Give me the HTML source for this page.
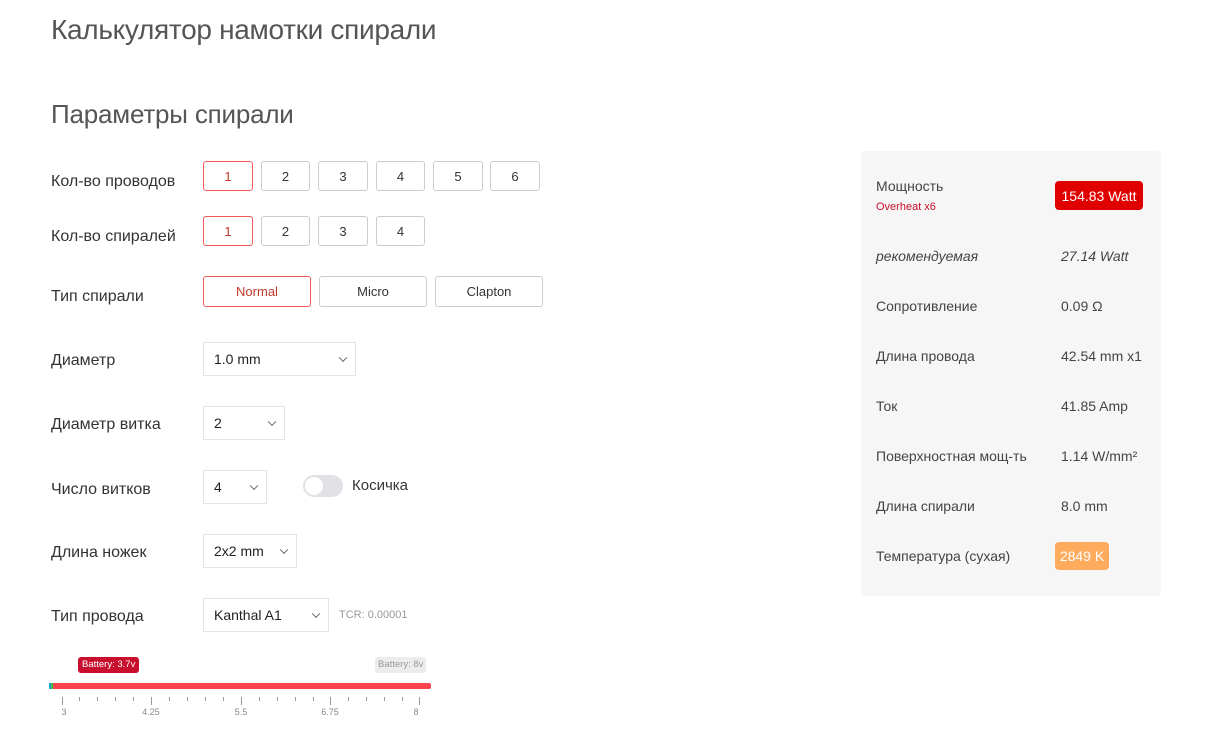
<!DOCTYPE html>
<html><head><meta charset="utf-8"><style>
body{margin:0;width:1207px;height:731px;background:#fff;font-family:"Liberation Sans",sans-serif;color:#333;position:relative;overflow:hidden}
.a{position:absolute;white-space:nowrap}
h1,h2{margin:0;font-weight:normal;color:#555;position:absolute;white-space:nowrap}
.lbl{position:absolute;left:51px;font-size:16px;color:#333;transform:translateY(-40%)}
.b{position:absolute;border:1px solid #ccc;border-radius:3px;box-sizing:border-box;font-size:13px;color:#333;display:flex;align-items:center;justify-content:center;background:#fff}
.b.on{border-color:#f05a5a;color:#c0392b}
.s{position:absolute;border:1px solid #e4e4e4;box-sizing:border-box;font-size:14px;color:#222;padding-left:10px;display:flex;align-items:center}
.s:after{content:"";position:absolute;right:9px;top:50%;width:5px;height:5px;border-right:1.3px solid #666;border-bottom:1.3px solid #666;transform:translateY(-70%) rotate(45deg)}
.p{position:absolute;font-size:14px;color:#444;transform:translateY(-50%)}
.tk{position:absolute;width:1px;background:#999;top:697px}
.tl{position:absolute;top:707px;font-size:9px;color:#888;transform:translateX(-50%)}
</style></head><body>
<h1 style="left:51px;top:14px;font-size:28px;letter-spacing:-0.3px">Калькулятор намотки спирали</h1>
<h2 style="left:51px;top:99px;font-size:26px;letter-spacing:-0.2px">Параметры спирали</h2>

<div class="lbl" style="top:180px">Кол-во проводов</div>
<div class="lbl" style="top:235px">Кол-во спиралей</div>
<div class="lbl" style="top:295px">Тип спирали</div>
<div class="lbl" style="top:359px">Диаметр</div>
<div class="lbl" style="top:423px">Диаметр витка</div>
<div class="lbl" style="top:488px">Число витков</div>
<div class="lbl" style="top:551px">Длина ножек</div>
<div class="lbl" style="top:615px">Тип провода</div>

<div class="b on" style="left:203px;top:161px;width:50px;height:30px">1</div>
<div class="b" style="left:261px;top:161px;width:49px;height:30px">2</div>
<div class="b" style="left:318px;top:161px;width:50px;height:30px">3</div>
<div class="b" style="left:376px;top:161px;width:49px;height:30px">4</div>
<div class="b" style="left:433px;top:161px;width:50px;height:30px">5</div>
<div class="b" style="left:490px;top:161px;width:50px;height:30px">6</div>

<div class="b on" style="left:203px;top:216px;width:50px;height:30px">1</div>
<div class="b" style="left:261px;top:216px;width:49px;height:30px">2</div>
<div class="b" style="left:318px;top:216px;width:50px;height:30px">3</div>
<div class="b" style="left:376px;top:216px;width:49px;height:30px">4</div>

<div class="b on" style="left:203px;top:276px;width:108px;height:31px">Normal</div>
<div class="b" style="left:319px;top:276px;width:108px;height:31px">Micro</div>
<div class="b" style="left:435px;top:276px;width:108px;height:31px">Clapton</div>

<div class="s" style="left:203px;top:342px;width:153px;height:34px">1.0 mm</div>
<div class="s" style="left:203px;top:406px;width:82px;height:34px">2</div>
<div class="s" style="left:203px;top:470px;width:64px;height:34px">4</div>
<div class="a" style="left:303px;top:475px;width:40px;height:22px;border-radius:11px;background:#e2e2e6"><div style="position:absolute;left:2px;top:2px;width:18px;height:18px;border-radius:50%;background:#fff"></div></div>
<div class="a" style="left:352px;top:477px;font-size:15px;color:#333">Косичка</div>
<div class="s" style="left:203px;top:534px;width:94px;height:34px">2x2 mm</div>
<div class="s" style="left:203px;top:598px;width:126px;height:34px">Kanthal A1</div>
<div class="a" style="left:339px;top:609px;font-size:11px;color:#999">TCR: 0.00001</div>

<div class="a" style="left:78px;top:657px;background:#c8102e;color:#fff;font-size:9.5px;padding:1px 4px;border-radius:3px;line-height:14px">Battery: 3.7v</div>
<div class="a" style="left:375px;top:657px;background:#ececec;color:#999;font-size:9.5px;padding:1px 3px;border-radius:3px;line-height:14px">Battery: 8v</div>
<div class="a" style="left:49px;top:683px;width:382px;height:6px;background:#f9434d;border-radius:2px"></div>
<div class="a" style="left:49px;top:683px;width:2px;height:6px;background:#1aa3c8"></div>
<div class="a" style="left:51px;top:683px;width:2px;height:6px;background:#3bbf4a"></div>
<div class="tk" style="left:62px;height:8px"></div><div class="tk" style="left:79px;height:4px"></div><div class="tk" style="left:97px;height:4px"></div><div class="tk" style="left:115px;height:4px"></div><div class="tk" style="left:133px;height:4px"></div><div class="tk" style="left:151px;height:8px"></div><div class="tk" style="left:169px;height:4px"></div><div class="tk" style="left:187px;height:4px"></div><div class="tk" style="left:205px;height:4px"></div><div class="tk" style="left:223px;height:4px"></div><div class="tk" style="left:241px;height:8px"></div><div class="tk" style="left:259px;height:4px"></div><div class="tk" style="left:277px;height:4px"></div><div class="tk" style="left:295px;height:4px"></div><div class="tk" style="left:313px;height:4px"></div><div class="tk" style="left:330px;height:8px"></div><div class="tk" style="left:348px;height:4px"></div><div class="tk" style="left:366px;height:4px"></div><div class="tk" style="left:384px;height:4px"></div><div class="tk" style="left:402px;height:4px"></div><div class="tk" style="left:419px;height:8px"></div>
<div class="tl" style="left:64px">3</div><div class="tl" style="left:151px">4.25</div><div class="tl" style="left:241px">5.5</div><div class="tl" style="left:330px">6.75</div><div class="tl" style="left:416px">8</div>

<div class="a" style="left:861px;top:151px;width:300px;height:445px;background:#f6f6f6;border-radius:4px"></div>
<div class="p" style="left:876px;top:186px">Мощность</div>
<div class="a" style="left:876px;top:201px;font-size:11px;color:#c8102e">Overheat x6</div>
<div class="a" style="left:1055px;top:181px;width:88px;height:29px;background:#e00000;color:#fff;border-radius:4px;font-size:14px;display:flex;align-items:center;justify-content:center">154.83 Watt</div>
<div class="p" style="left:876px;top:256px;font-style:italic">рекомендуемая</div>
<div class="p" style="left:1061px;top:256px;font-style:italic">27.14 Watt</div>
<div class="p" style="left:876px;top:306px">Сопротивление</div><div class="p" style="left:1061px;top:306px">0.09 Ω</div>
<div class="p" style="left:876px;top:356px">Длина провода</div><div class="p" style="left:1061px;top:356px">42.54 mm x1</div>
<div class="p" style="left:876px;top:406px">Ток</div><div class="p" style="left:1061px;top:406px">41.85 Amp</div>
<div class="p" style="left:876px;top:456px">Поверхностная мощ-ть</div><div class="p" style="left:1061px;top:456px">1.14 W/mm²</div>
<div class="p" style="left:876px;top:506px">Длина спирали</div><div class="p" style="left:1061px;top:506px">8.0 mm</div>
<div class="p" style="left:876px;top:556px">Температура (сухая)</div>
<div class="a" style="left:1055px;top:542px;width:54px;height:28px;background:#ffab5e;color:#fff;border-radius:4px;font-size:14px;display:flex;align-items:center;justify-content:center">2849 K</div>
</body></html>
